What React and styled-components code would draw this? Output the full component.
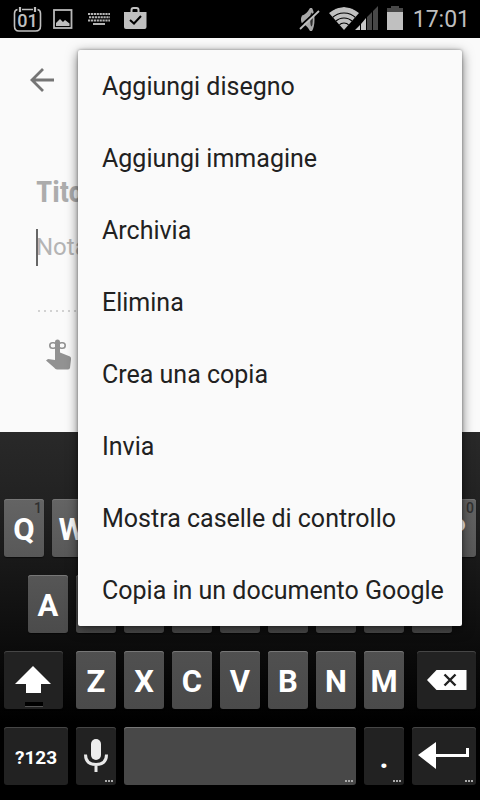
import React from "react";
import styled, { createGlobalStyle } from "styled-components";

const GlobalStyle = createGlobalStyle`
  *, *::before, *::after { box-sizing: border-box; }
  body {
    margin: 0;
    background: #000;
    font-family: Roboto, "Noto Sans", sans-serif;
  }
  button, input {
    font-family: inherit;
    border: 0;
    padding: 0;
    background: none;
  }
  svg { display: block; flex: none; }
`;

const Screen = styled.div`
  position: relative;
  min-height: 100vh;
  display: flex;
  flex-direction: column;
  overflow: hidden;
`;

const StatusBar = styled.header`
  height: 38px;
  display: flex;
  align-items: center;
  justify-content: space-between;
  padding: 0 10px 0 9px;
  background: #000;
  color: #bebebe;
`;

const StatusGroup = styled.div`
  display: flex;
  align-items: center;
  gap: ${(p) => p.$gap || 0}px;
`;

const Clock = styled.time`
  margin-left: 2px;
  padding-top: 2px;
  font-size: 23px;
  line-height: 38px;
`;

const Note = styled.main`
  flex: 1;
  display: flex;
  flex-direction: column;
  align-items: flex-start;
  padding: 20px 36px 0;
  background: #fafafa;
`;

const BackButton = styled.button`
  width: 44px;
  height: 44px;
  margin-left: -16px;
  display: grid;
  place-items: center;
`;

const TitleInput = styled.input`
  width: 100%;
  height: 40px;
  margin-top: 69px;
  font-family: "Roboto Condensed", "Liberation Sans Narrow", Roboto, sans-serif;
  font-size: 30px;
  font-weight: 700;
  color: #212121;
  &::placeholder { color: #acacac; opacity: 1; }
`;

const BodyField = styled.div`
  position: relative;
  width: 100%;
  height: 38px;
  margin-top: 17px;
`;

const BodyInput = styled.input`
  width: 100%;
  height: 38px;
  font-size: 24px;
  color: #212121;
  &::placeholder { color: #b4b4b4; opacity: 1; }
`;

const Caret = styled.span`
  position: absolute;
  top: 1px;
  left: 0;
  width: 2px;
  height: 37px;
  background: #666;
`;

const DottedRule = styled.div`
  width: 100%;
  height: 2px;
  margin-top: 44px;
  margin-bottom: 27px;
  background: repeating-linear-gradient(90deg, transparent 0 2px, #d2d2d2 2px 4px, transparent 4px 6px);
`;

const ReminderButton = styled.button`
  margin-left: 10px;
`;

const Menu = styled.div`
  position: absolute;
  z-index: 2;
  top: 50px;
  right: 18px;
  width: 80%;
  border-radius: 2px;
  background: #fafafa;
  box-shadow: 0 3px 12px rgba(0, 0, 0, 0.55), 0 0 3px rgba(0, 0, 0, 0.35);
`;

const MenuItem = styled.button`
  display: block;
  width: 100%;
  height: 72px;
  padding: 0 24px;
  font-size: 25px;
  text-align: left;
  white-space: nowrap;
  color: #212121;
`;

const Keyboard = styled.section`
  display: flex;
  flex-direction: column;
  gap: 18px;
  padding: 67px 0 15px;
  background: linear-gradient(#292929 0, #222 67px, #0e0e0e 200px, #000 290px);
`;

const rowColumns = {
  letters: "repeat(10, minmax(0, 1fr))",
  home: "repeat(9, minmax(0, 1fr))",
  shift: "minmax(0, 3fr) repeat(7, minmax(0, 2fr)) minmax(0, 3fr)",
  bottom: "minmax(0, 3fr) minmax(0, 2fr) minmax(0, 10fr) minmax(0, 2fr) minmax(0, 3fr)",
};

const KeyRow = styled.div`
  display: grid;
  grid-template-columns: ${(p) => rowColumns[p.$kind]};
  padding: 0 ${(p) => (p.$kind === "home" ? "5%" : "0")};
`;

const KeyCell = styled.div`
  padding-left: ${(p) => (p.$wide === "right" ? 9 : 4)}px;
  padding-right: ${(p) => (p.$wide === "left" ? 9 : 4)}px;
`;

const keyFaces = {
  top: "linear-gradient(#646464, #585858)",
  middle: "linear-gradient(#565656, #4b4b4b)",
  lower: "linear-gradient(#505050, #4a4a4a)",
  space: "#484848",
  dark: "#222",
};

const KeyButton = styled.button`
  position: relative;
  display: grid;
  place-items: center;
  width: 100%;
  height: 58px;
  padding-top: ${(p) => (p.$text ? 4 : 0)}px;
  border-radius: 3px;
  background: ${(p) => keyFaces[p.$face]};
  box-shadow:
    inset 0 1px 0 ${(p) => (p.$face === "dark" ? "#464646" : "#777")},
    0 1px 1px rgba(0, 0, 0, 0.5);
  color: #fff;
  font-size: ${(p) => (p.$small ? 19 : 31)}px;
  line-height: 32px;
  font-weight: 700;
`;

const KeyHint = styled.span`
  position: absolute;
  top: 2px;
  right: 2px;
  color: #303030;
  font-size: 14px;
  line-height: 14px;
  font-weight: 500;
`;

const MoreDots = styled.span`
  position: absolute;
  right: 3px;
  bottom: 3px;
  width: 8px;
  height: 2px;
  background: repeating-linear-gradient(90deg, #aaa 0 2px, transparent 2px 3px);
`;

const CalendarIcon = () => (
  <svg width="36" height="38" viewBox="0 0 36 38" fill="none" stroke="#c0c0c0">
    <path d="M13 9.500H24M28.500 9.500q3 .5 3 4V26q0 5-5 5H10q-4.500 0-4.500-5V13.500q0-3.500 3-4" strokeWidth="1.600" />
    <path d="M11 7v5M26 7v5" strokeWidth="2.200" />
    <text x="18.500" y="27" textAnchor="middle" fontFamily="Roboto" fontSize="18" fontWeight="500" fill="#c0c0c0" stroke="none">01</text>
  </svg>
);

const PictureIcon = () => (
  <svg width="36" height="38" viewBox="0 0 36 38">
    <rect x="9" y="10" width="17.500" height="18" fill="none" stroke="#b8b8b8" strokeWidth="1.800" />
    <path d="M11 26v-3l4-4 3 3 2-2 4.500 3.500V26z" fill="#bebebe" />
  </svg>
);

const KeyboardIcon = () => (
  <svg width="36" height="38" viewBox="0 0 36 38" stroke="#b4b4b4" strokeWidth="2">
    <path d="M7 14h22" strokeDasharray="2.200 .7" />
    <path d="M8 17.300h21" strokeDasharray="2.200 .7" />
    <path d="M7 20.600h22" strokeDasharray="2.200 .7" />
    <path d="M12 24h12" />
  </svg>
);

const BagIcon = () => (
  <svg width="36" height="38" viewBox="0 0 36 38">
    <path d="M14.500 13v-3q0-2 2-2h3q2 0 2 2v3" fill="none" stroke="#c0c0c0" strokeWidth="2" />
    <path d="M7 12h22.500v15q0 2-2 2H9q-2 0-2-2z" fill="#c0c0c0" />
    <path d="M13 20l4 3.500 7-7.500" fill="none" stroke="#000" strokeWidth="2" />
  </svg>
);

const MutedIcon = () => (
  <svg width="22" height="38" viewBox="0 0 22 38">
    <path d="M3 15.500q4-.5 8-7.500h2q2.500 4 2.500 11.500T13 31h-2q-4-7-8-7.500-2-4 0-8z" fill="#a8a8a8" />
    <ellipse cx="12.500" cy="19.500" rx="1.300" ry="7" fill="#303030" />
    <path d="M0 27L19 10" stroke="#000" strokeWidth="2" />
    <path d="M1 29L20 11" stroke="#bebebe" strokeWidth="1.800" />
  </svg>
);

const NetworkIcon = () => (
  <svg width="50" height="38" viewBox="0 0 50 38">
    <clipPath id="wifi-fan"><path d="M15 30L0 13Q15 1 30 13z" /></clipPath>
    <g clipPath="url(#wifi-fan)">
      <circle cx="15" cy="30" r="23" fill="#c0c0c0" />
      <g fill="none" stroke="#000" strokeWidth="1.200">
        <circle cx="15" cy="30" r="7" />
        <circle cx="15" cy="30" r="12" />
        <circle cx="15" cy="30" r="17" />
      </g>
    </g>
    <path d="M26 30l5-5v5zM32 24l5-6v12h-5z" fill="#c8c8c8" />
    <path d="M38 17l5-5v18h-5zM44 11l5-5v24h-5z" fill="#484848" />
  </svg>
);

const BatteryIcon = () => (
  <svg width="16" height="38" viewBox="0 0 16 38">
    <path d="M0 12V8h4V6h8v2h4v4z" fill="#484848" />
    <path d="M0 12h16v18H0z" fill="#c0c0c0" />
  </svg>
);

const BackIcon = () => (
  <svg width="26" height="26" viewBox="0 0 26 26" fill="none" stroke="#757575" strokeWidth="2.800">
    <path d="M25 13H3M14 2L3 13l11 11" />
  </svg>
);

const ReminderIcon = () => (
  <svg width="27" height="32" viewBox="0 0 27 32">
    <g fill="none" stroke="#929292" strokeWidth="1.600">
      <rect x="3.800" y="3.800" width="6.500" height="5.500" rx="2.700" />
      <rect x="12.700" y="3.800" width="6.500" height="5.500" rx="2.700" />
    </g>
    <path d="M9 3q0-2.500 2.500-2.500T14 3v10.500l10 4q1.500 1 1 3L24 29q-.5 1.500-2.500 1.500H11q-1.500 0-3-2L0 21.500 2 20l7 1z" fill="#929292" />
  </svg>
);

const ShiftIcon = () => (
  <svg width="40" height="58" viewBox="0 0 40 58">
    <path d="M19 15L37 33H27v9H12v-9H1z" fill="#fff" />
    <path d="M11 51h18v4H11z" fill="#000" />
    <path d="M11 55h18v1H11z" fill="#555" />
  </svg>
);

const DeleteIcon = () => (
  <svg width="40" height="20" viewBox="0 0 40 20">
    <path d="M0 10L9.500 0H39.500v20H9.500z" fill="#fff" />
    <path d="M17.500 4.500l11 11M28.500 4.500l-11 11" stroke="#222" strokeWidth="2.400" />
  </svg>
);

const MicIcon = () => (
  <svg width="24" height="34" viewBox="0 0 24 34">
    <rect x="7" y="0" width="10" height="21" rx="5" fill="#eee" />
    <path d="M1.500 15.500q0 10 10.500 10t10.500-10M12 25v8" fill="none" stroke="#e8e8e8" strokeWidth="3" />
  </svg>
);

const EnterIcon = () => (
  <svg width="52" height="28" viewBox="0 0 52 28">
    <path d="M0 13L18 0V12H48V6h3v9H18v12z" fill="#fff" />
  </svg>
);

const MENU_ITEMS = [
  "Aggiungi disegno",
  "Aggiungi immagine",
  "Archivia",
  "Elimina",
  "Crea una copia",
  "Invia",
  "Mostra caselle di controllo",
  "Copia in un documento Google",
];

function Key({ label, name, face = "dark", wide, hint, small, more, children }) {
  return (
    <KeyCell $wide={wide}>
      <KeyButton type="button" $face={face} $small={small} $text={Boolean(label)} aria-label={name}>
        {label}
        {children}
        {hint && <KeyHint>{hint}</KeyHint>}
        {more && <MoreDots />}
      </KeyButton>
    </KeyCell>
  );
}

export default function App() {
  return (
    <Screen>
      <GlobalStyle />
      <StatusBar>
        <StatusGroup>
          <CalendarIcon />
          <PictureIcon />
          <KeyboardIcon />
          <BagIcon />
        </StatusGroup>
        <StatusGroup $gap={8}>
          <MutedIcon />
          <NetworkIcon />
          <BatteryIcon />
          <Clock>17:01</Clock>
        </StatusGroup>
      </StatusBar>

      <Note>
        <BackButton type="button" aria-label="Indietro"><BackIcon /></BackButton>
        <TitleInput aria-label="Titolo" placeholder="Titolo" />
        <BodyField>
          <BodyInput aria-label="Nota" placeholder="Nota" />
          <Caret />
        </BodyField>
        <DottedRule />
        <ReminderButton type="button" aria-label="Promemoria"><ReminderIcon /></ReminderButton>
      </Note>

      <Keyboard aria-label="Tastiera">
        <KeyRow $kind="letters">
          {[..."QWERTYUIOP"].map((c, i) => (
            <Key key={c} label={c} face="top" hint={String((i + 1) % 10)} />
          ))}
        </KeyRow>
        <KeyRow $kind="home">
          {[..."ASDFGHJKL"].map((c) => <Key key={c} label={c} face="middle" />)}
        </KeyRow>
        <KeyRow $kind="shift">
          <Key name="Maiuscole" wide="left"><ShiftIcon /></Key>
          {[..."ZXCVBNM"].map((c) => <Key key={c} label={c} face="lower" />)}
          <Key name="Cancella" wide="right"><DeleteIcon /></Key>
        </KeyRow>
        <KeyRow $kind="bottom">
          <Key label="?123" small />
          <Key name="Voce" more><MicIcon /></Key>
          <Key name="Spazio" face="space" more />
          <Key label="." more />
          <Key name="Invio" more><EnterIcon /></Key>
        </KeyRow>
      </Keyboard>

      <Menu role="menu">
        {MENU_ITEMS.map((item) => (
          <MenuItem key={item} type="button" role="menuitem">{item}</MenuItem>
        ))}
      </Menu>
    </Screen>
  );
}
